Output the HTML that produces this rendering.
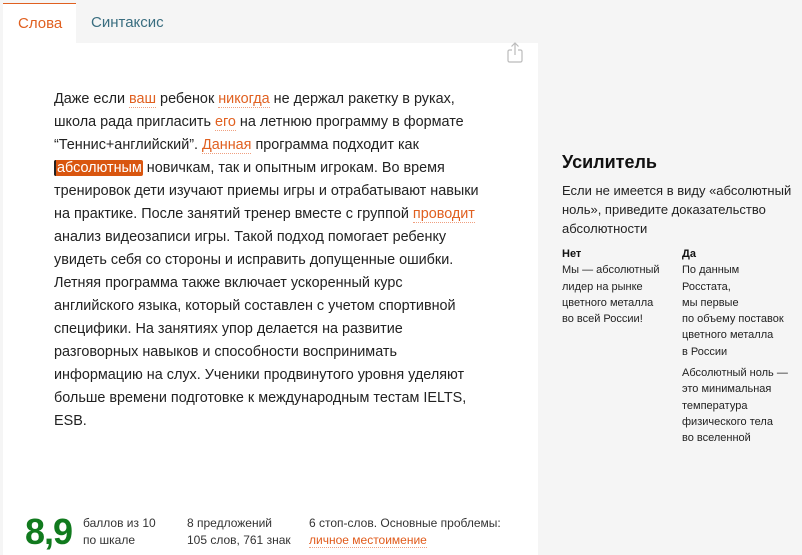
<!DOCTYPE html>
<html><head><meta charset="utf-8"><style>
*{margin:0;padding:0;box-sizing:border-box}
body{width:802px;height:555px;background:#f5f5f5;font-family:"Liberation Sans",Arial,sans-serif;position:relative;overflow:hidden;color:#222}
.tab1{position:absolute;left:3px;top:3px;width:73px;height:40px;background:#fff;border-top:1px solid #e06020;color:#e06020;font-size:15px;padding:11px 0 0 15px}
.tab2{position:absolute;left:91px;top:14px;color:#3a6e80;font-size:15px}
.panel{position:absolute;left:3px;top:43px;width:535px;height:512px;background:#fff}
.text{position:absolute;left:54px;top:88px;font-size:14.4px;line-height:23px;white-space:nowrap;color:#222}
.o{color:#e06020;border-bottom:1px dotted #f0a080}
.hl{background:#d9560f;color:#fff;border-radius:2px;border-left:2px solid #222;padding:0 1px}
.share{position:absolute;left:506px;top:42px}
.side{position:absolute;left:562px;top:152px;width:240px}
.side h2{font-size:18px;font-weight:bold;color:#111;margin-bottom:8px}
.side p{font-size:13px;line-height:19px;color:#222}
.cols{position:absolute;top:94px;font-size:11px;line-height:16.3px;color:#222;white-space:nowrap}
.cols b{color:#111}
.foot{position:absolute;top:515px;font-size:12px;line-height:17px;color:#333;white-space:nowrap}
.score{position:absolute;left:25px;top:511px;font-size:36px;font-weight:bold;color:#117a1e;letter-spacing:-1px}
</style></head><body>
<div class="tab1">Слова</div>
<div class="tab2">Синтаксис</div>
<div class="panel"></div>
<svg class="share" width="18" height="22" viewBox="0 0 18 22"><path d="M9 1v12M5.5 4.5L9 1l3.5 3.5" fill="none" stroke="#bbb" stroke-width="1.2"/><path d="M6 8H3.5a1.5 1.5 0 0 0-1.5 1.5v9A1.5 1.5 0 0 0 3.5 20h11a1.5 1.5 0 0 0 1.5-1.5v-9A1.5 1.5 0 0 0 14.5 8H12" fill="none" stroke="#bbb" stroke-width="1.2"/></svg>
<div class="text">
Даже если <span class="o">ваш</span> ребенок <span class="o">никогда</span> не держал ракетку в руках,<br>
школа рада пригласить <span class="o">его</span> на летнюю программу в формате<br>
“Теннис+английский”. <span class="o">Данная</span> программа подходит как<br>
<span class="hl">абсолютным</span> новичкам, так и опытным игрокам. Во время<br>
тренировок дети изучают приемы игры и отрабатывают навыки<br>
на практике. После занятий тренер вместе с группой <span class="o">проводит</span><br>
анализ видеозаписи игры. Такой подход помогает ребенку<br>
увидеть себя со стороны и исправить допущенные ошибки.<br>
Летняя программа также включает ускоренный курс<br>
английского языка, который составлен с учетом спортивной<br>
специфики. На занятиях упор делается на развитие<br>
разговорных навыков и способности воспринимать<br>
информацию на слух. Ученики продвинутого уровня уделяют<br>
больше времени подготовке к международным тестам IELTS,<br>
ESB.
</div>
<div class="side">
<h2>Усилитель</h2>
<p>Если не имеется в виду «абсолютный<br>ноль», приведите доказательство<br>абсолютности</p>
<div class="cols" style="left:0"><b>Нет</b><br>Мы — абсолютный<br>лидер на рынке<br>цветного металла<br>во всей России!</div>
<div class="cols" style="left:120px"><b>Да</b><br>По данным<br>Росстата,<br>мы первые<br>по объему поставок<br>цветного металла<br>в России<div style="height:5px"></div>Абсолютный ноль —<br>это минимальная<br>температура<br>физического тела<br>во вселенной</div>
</div>
<div class="score">8,9</div>
<div class="foot" style="left:83px">баллов из 10<br>по шкале</div>
<div class="foot" style="left:187px">8 предложений<br>105 слов, 761 знак</div>
<div class="foot" style="left:309px">6 стоп-слов. Основные проблемы:<br><span class="o" style="color:#e05a1a">личное местоимение</span></div>
</body></html>
